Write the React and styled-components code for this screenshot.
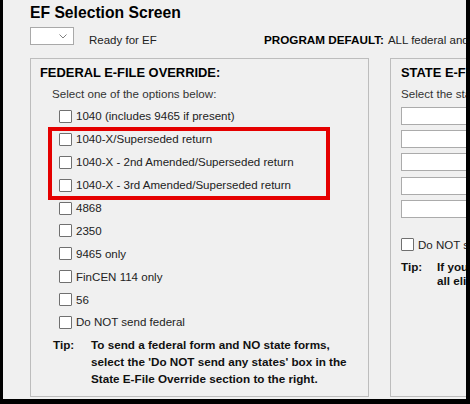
import React from 'react';
import styled, { createGlobalStyle } from 'styled-components';

const GlobalStyle = createGlobalStyle`
  html, body {
    margin: 0;
    padding: 0;
    background: #000;
  }
  body {
    font-family: "Liberation Sans", Arial, sans-serif;
  }
`;

const Frame = styled.div`
  width: 470px;
  height: 404px;
  background: #000;
  overflow: hidden;
`;

const Screen = styled.div`
  margin-left: 3px;
  width: 463px;
  height: 399px;
  background: #f0f0f0;
  padding: 3px 0 0 27px;
  box-sizing: border-box;
  overflow: hidden;
  white-space: nowrap;
`;

const Title = styled.h1`
  margin: 0;
  font-size: 15.7px;
  line-height: 20px;
  font-weight: bold;
  color: #000;
`;

const StatusRow = styled.div`
  display: flex;
  align-items: flex-start;
  margin-top: 4px;
  height: 18px;

  & > * {
    flex-shrink: 0;
  }
`;

const Dropdown = styled.div`
  width: 44px;
  height: 18px;
  box-sizing: border-box;
  background: #fff;
  border: 1px solid #a9a9a9;
  display: flex;
  align-items: center;
  justify-content: flex-end;
  padding-right: 6px;
`;

const StatusText = styled.span`
  width: 175px;
  margin-left: 15px;
  margin-top: 5px;
  font-size: 11.5px;
  line-height: 16px;
  color: #222;
`;

const DefaultLabel = styled.span`
  margin-top: 5px;
  font-size: 11.7px;
  line-height: 16px;
  font-weight: bold;
  color: #000;
`;

const DefaultValue = styled.span`
  margin-top: 5px;
  margin-left: 4px;
  font-size: 11.5px;
  line-height: 16px;
  color: #222;
`;

const Panels = styled.div`
  display: flex;
  gap: 21px;
  margin-top: 13px;
  height: 339px;
`;

const Panel = styled.section`
  position: relative;
  flex: 0 0 339px;
  box-sizing: border-box;
  border: 1px solid #bdbdbd;
  padding: 6px 0 0 ${p => p.$pad}px;
`;

const PanelTitle = styled.h2`
  margin: 0;
  font-size: 12.9px;
  line-height: 16px;
  font-weight: bold;
  color: #000;
`;

const Hint = styled.p`
  margin: 4.5px 0 0 ${p => p.$indent || 0}px;
  font-size: 11.6px;
  line-height: 16px;
  color: #333;
`;

const OptionList = styled.div`
  margin: 3.5px 0 0 19px;
  display: flex;
  flex-direction: column;
`;

const Option = styled.label`
  display: flex;
  align-items: center;
  gap: 4px;
  height: 22.9px;
  font-size: 11.55px;
  color: #222;
`;

const StateOption = styled(Option)`
  height: 22px;
  margin-top: 16px;
`;

const Box = styled.span`
  width: 13px;
  height: 13px;
  box-sizing: border-box;
  background: #fff;
  border: 1px solid #707070;
  border-radius: 1px;
  flex-shrink: 0;
`;

const Tip = styled.div`
  display: flex;
  margin: ${p => p.$margin};
  font-size: 11.7px;
  line-height: ${p => p.$line}px;
  font-weight: bold;
  color: #111;
`;

const TipLabel = styled.span`
  flex: 0 0 ${p => p.$width}px;
`;

const Highlight = styled.div`
  position: absolute;
  left: 17px;
  top: 68px;
  width: 282px;
  height: 73px;
  box-sizing: border-box;
  border: 4px solid #e50000;
  pointer-events: none;
`;

const InputList = styled.div`
  margin-top: 5.5px;
  display: flex;
  flex-direction: column;
  gap: 5.2px;
`;

const TextField = styled.div`
  width: 200px;
  height: 18px;
  box-sizing: border-box;
  background: #fff;
  border: 1px solid #ababab;
`;

const Chevron = () => (
  <svg width="8" height="5" viewBox="0 0 8 5">
    <path d="M0.5 0.5 L4 4 L7.5 0.5" fill="none" stroke="#808080" strokeWidth="1" />
  </svg>
);

const federalOptions = [
  '1040 (includes 9465 if present)',
  '1040-X/Superseded return',
  '1040-X - 2nd Amended/Superseded return',
  '1040-X - 3rd Amended/Superseded return',
  '4868',
  '2350',
  '9465 only',
  'FinCEN 114 only',
  '56',
  'Do NOT send federal',
];

const App = () => (
  <Frame>
    <GlobalStyle />
    <Screen>
      <Title>EF Selection Screen</Title>
      <StatusRow>
        <Dropdown><Chevron /></Dropdown>
        <StatusText>Ready for EF</StatusText>
        <DefaultLabel>PROGRAM DEFAULT:</DefaultLabel>
        <DefaultValue>ALL federal and state returns</DefaultValue>
      </StatusRow>

      <Panels>
        {/* federal */}
        <Panel $pad={9}>
          <PanelTitle>FEDERAL E-FILE OVERRIDE:</PanelTitle>
          <Hint $indent={12}>Select one of the options below:</Hint>
          <OptionList>
            {federalOptions.map(label => (
              <Option key={label}>
                <Box />
                {label}
              </Option>
            ))}
          </OptionList>
          <Tip $margin="2.5px 0 0 13px" $line={17}>
            <TipLabel $width={38}>Tip:</TipLabel>
            <span>
              To send a federal form and NO state forms,<br />
              select the 'Do NOT send any states' box in the<br />
              State E-File Override section to the right.
            </span>
          </Tip>
          <Highlight />
        </Panel>

        {/* state */}
        <Panel $pad={10}>
          <PanelTitle>STATE E-FILE OVERRIDE:</PanelTitle>
          <Hint>Select the states to send below:</Hint>
          <InputList>
            {[0, 1, 2, 3, 4].map(i => <TextField key={i} />)}
          </InputList>
          <StateOption>
            <Box />
            Do NOT send any states
          </StateOption>
          <Tip $margin="4px 0 0 0" $line={14.5}>
            <TipLabel $width={36}>Tip:</TipLabel>
            <span>
              If you do not select a state, the program sends<br />
              all eligible states.
            </span>
          </Tip>
        </Panel>
      </Panels>
    </Screen>
  </Frame>
);

export default App;
